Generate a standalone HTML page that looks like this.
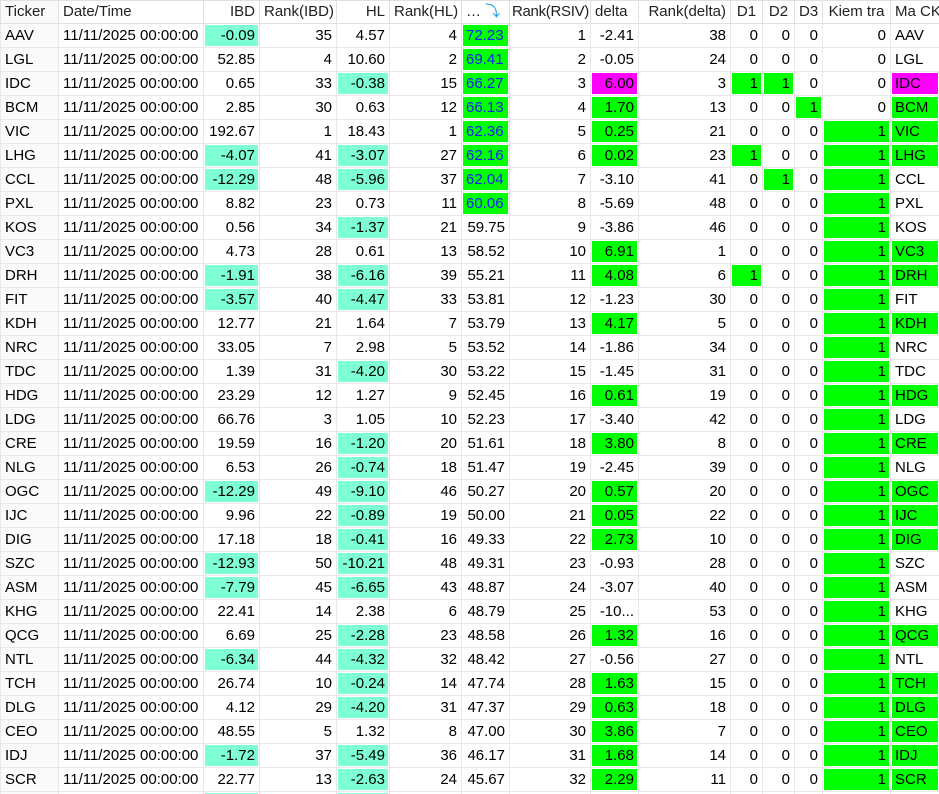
<!DOCTYPE html>
<html><head><meta charset="utf-8"><style>
html,body{margin:0;padding:0;background:#fff;width:939px;height:794px;overflow:hidden}
table{border-collapse:collapse;table-layout:fixed;width:939px;font-family:"Liberation Sans",sans-serif;font-size:15px;color:#000}
td,th{height:23px;padding:0 4px;border:1px solid #e8e8e8;text-align:right;white-space:nowrap;overflow:hidden;font-weight:normal;line-height:22px}
th{height:21px;color:#222;border-color:#e0e0e0}
td:first-child,th:first-child{text-align:left;background:#fafafa}
td:nth-child(2),th:nth-child(2),td:last-child,th:last-child{text-align:left}
th:nth-child(14){text-align:center}
.a{background:#7fffd4;box-shadow:inset 0 0 0 1px #fff}
.g{background:#00ff00;box-shadow:inset 0 0 0 1px #fff}
.m{background:#ff00ff;box-shadow:inset 0 0 0 1px #fff}
.b{background:#00ff00;color:#1a1aff;box-shadow:inset 0 0 0 1px #fff;text-align:left}
</style></head><body>
<table>
<colgroup><col style="width:58px"><col style="width:145px"><col style="width:56px"><col style="width:77px"><col style="width:53px"><col style="width:72px"><col style="width:48px"><col style="width:81px"><col style="width:48px"><col style="width:92px"><col style="width:32px"><col style="width:32px"><col style="width:28px"><col style="width:68px"><col style="width:49px"></colgroup>
<tr><th>Ticker</th><th>Date/Time</th><th>IBD</th><th>Rank(IBD)</th><th>HL</th><th>Rank(HL)</th><th style="text-align:left">… <span style="color:#19a0e0">⤵</span></th><th style="padding:0 1px;letter-spacing:-0.3px">Rank(RSIV)</th><th style="text-align:left">delta</th><th>Rank(delta)</th><th style="text-align:center">D1</th><th style="text-align:center">D2</th><th style="text-align:center">D3</th><th>Kiem tra</th><th>Ma CK</th></tr>
<tr><td>AAV</td><td>11/11/2025 00:00:00</td><td class="a">-0.09</td><td>35</td><td>4.57</td><td>4</td><td class="b">72.23</td><td>1</td><td>-2.41</td><td>38</td><td>0</td><td>0</td><td>0</td><td>0</td><td>AAV</td></tr>
<tr><td>LGL</td><td>11/11/2025 00:00:00</td><td>52.85</td><td>4</td><td>10.60</td><td>2</td><td class="b">69.41</td><td>2</td><td>-0.05</td><td>24</td><td>0</td><td>0</td><td>0</td><td>0</td><td>LGL</td></tr>
<tr><td>IDC</td><td>11/11/2025 00:00:00</td><td>0.65</td><td>33</td><td class="a">-0.38</td><td>15</td><td class="b">66.27</td><td>3</td><td class="m">6.00</td><td>3</td><td class="g">1</td><td class="g">1</td><td>0</td><td>0</td><td class="m">IDC</td></tr>
<tr><td>BCM</td><td>11/11/2025 00:00:00</td><td>2.85</td><td>30</td><td>0.63</td><td>12</td><td class="b">66.13</td><td>4</td><td class="g">1.70</td><td>13</td><td>0</td><td>0</td><td class="g">1</td><td>0</td><td class="g">BCM</td></tr>
<tr><td>VIC</td><td>11/11/2025 00:00:00</td><td>192.67</td><td>1</td><td>18.43</td><td>1</td><td class="b">62.36</td><td>5</td><td class="g">0.25</td><td>21</td><td>0</td><td>0</td><td>0</td><td class="g">1</td><td class="g">VIC</td></tr>
<tr><td>LHG</td><td>11/11/2025 00:00:00</td><td class="a">-4.07</td><td>41</td><td class="a">-3.07</td><td>27</td><td class="b">62.16</td><td>6</td><td class="g">0.02</td><td>23</td><td class="g">1</td><td>0</td><td>0</td><td class="g">1</td><td class="g">LHG</td></tr>
<tr><td>CCL</td><td>11/11/2025 00:00:00</td><td class="a">-12.29</td><td>48</td><td class="a">-5.96</td><td>37</td><td class="b">62.04</td><td>7</td><td>-3.10</td><td>41</td><td>0</td><td class="g">1</td><td>0</td><td class="g">1</td><td>CCL</td></tr>
<tr><td>PXL</td><td>11/11/2025 00:00:00</td><td>8.82</td><td>23</td><td>0.73</td><td>11</td><td class="b">60.06</td><td>8</td><td>-5.69</td><td>48</td><td>0</td><td>0</td><td>0</td><td class="g">1</td><td>PXL</td></tr>
<tr><td>KOS</td><td>11/11/2025 00:00:00</td><td>0.56</td><td>34</td><td class="a">-1.37</td><td>21</td><td>59.75</td><td>9</td><td>-3.86</td><td>46</td><td>0</td><td>0</td><td>0</td><td class="g">1</td><td>KOS</td></tr>
<tr><td>VC3</td><td>11/11/2025 00:00:00</td><td>4.73</td><td>28</td><td>0.61</td><td>13</td><td>58.52</td><td>10</td><td class="g">6.91</td><td>1</td><td>0</td><td>0</td><td>0</td><td class="g">1</td><td class="g">VC3</td></tr>
<tr><td>DRH</td><td>11/11/2025 00:00:00</td><td class="a">-1.91</td><td>38</td><td class="a">-6.16</td><td>39</td><td>55.21</td><td>11</td><td class="g">4.08</td><td>6</td><td class="g">1</td><td>0</td><td>0</td><td class="g">1</td><td class="g">DRH</td></tr>
<tr><td>FIT</td><td>11/11/2025 00:00:00</td><td class="a">-3.57</td><td>40</td><td class="a">-4.47</td><td>33</td><td>53.81</td><td>12</td><td>-1.23</td><td>30</td><td>0</td><td>0</td><td>0</td><td class="g">1</td><td>FIT</td></tr>
<tr><td>KDH</td><td>11/11/2025 00:00:00</td><td>12.77</td><td>21</td><td>1.64</td><td>7</td><td>53.79</td><td>13</td><td class="g">4.17</td><td>5</td><td>0</td><td>0</td><td>0</td><td class="g">1</td><td class="g">KDH</td></tr>
<tr><td>NRC</td><td>11/11/2025 00:00:00</td><td>33.05</td><td>7</td><td>2.98</td><td>5</td><td>53.52</td><td>14</td><td>-1.86</td><td>34</td><td>0</td><td>0</td><td>0</td><td class="g">1</td><td>NRC</td></tr>
<tr><td>TDC</td><td>11/11/2025 00:00:00</td><td>1.39</td><td>31</td><td class="a">-4.20</td><td>30</td><td>53.22</td><td>15</td><td>-1.45</td><td>31</td><td>0</td><td>0</td><td>0</td><td class="g">1</td><td>TDC</td></tr>
<tr><td>HDG</td><td>11/11/2025 00:00:00</td><td>23.29</td><td>12</td><td>1.27</td><td>9</td><td>52.45</td><td>16</td><td class="g">0.61</td><td>19</td><td>0</td><td>0</td><td>0</td><td class="g">1</td><td class="g">HDG</td></tr>
<tr><td>LDG</td><td>11/11/2025 00:00:00</td><td>66.76</td><td>3</td><td>1.05</td><td>10</td><td>52.23</td><td>17</td><td>-3.40</td><td>42</td><td>0</td><td>0</td><td>0</td><td class="g">1</td><td>LDG</td></tr>
<tr><td>CRE</td><td>11/11/2025 00:00:00</td><td>19.59</td><td>16</td><td class="a">-1.20</td><td>20</td><td>51.61</td><td>18</td><td class="g">3.80</td><td>8</td><td>0</td><td>0</td><td>0</td><td class="g">1</td><td class="g">CRE</td></tr>
<tr><td>NLG</td><td>11/11/2025 00:00:00</td><td>6.53</td><td>26</td><td class="a">-0.74</td><td>18</td><td>51.47</td><td>19</td><td>-2.45</td><td>39</td><td>0</td><td>0</td><td>0</td><td class="g">1</td><td>NLG</td></tr>
<tr><td>OGC</td><td>11/11/2025 00:00:00</td><td class="a">-12.29</td><td>49</td><td class="a">-9.10</td><td>46</td><td>50.27</td><td>20</td><td class="g">0.57</td><td>20</td><td>0</td><td>0</td><td>0</td><td class="g">1</td><td class="g">OGC</td></tr>
<tr><td>IJC</td><td>11/11/2025 00:00:00</td><td>9.96</td><td>22</td><td class="a">-0.89</td><td>19</td><td>50.00</td><td>21</td><td class="g">0.05</td><td>22</td><td>0</td><td>0</td><td>0</td><td class="g">1</td><td class="g">IJC</td></tr>
<tr><td>DIG</td><td>11/11/2025 00:00:00</td><td>17.18</td><td>18</td><td class="a">-0.41</td><td>16</td><td>49.33</td><td>22</td><td class="g">2.73</td><td>10</td><td>0</td><td>0</td><td>0</td><td class="g">1</td><td class="g">DIG</td></tr>
<tr><td>SZC</td><td>11/11/2025 00:00:00</td><td class="a">-12.93</td><td>50</td><td class="a">-10.21</td><td>48</td><td>49.31</td><td>23</td><td>-0.93</td><td>28</td><td>0</td><td>0</td><td>0</td><td class="g">1</td><td>SZC</td></tr>
<tr><td>ASM</td><td>11/11/2025 00:00:00</td><td class="a">-7.79</td><td>45</td><td class="a">-6.65</td><td>43</td><td>48.87</td><td>24</td><td>-3.07</td><td>40</td><td>0</td><td>0</td><td>0</td><td class="g">1</td><td>ASM</td></tr>
<tr><td>KHG</td><td>11/11/2025 00:00:00</td><td>22.41</td><td>14</td><td>2.38</td><td>6</td><td>48.79</td><td>25</td><td>-10...</td><td>53</td><td>0</td><td>0</td><td>0</td><td class="g">1</td><td>KHG</td></tr>
<tr><td>QCG</td><td>11/11/2025 00:00:00</td><td>6.69</td><td>25</td><td class="a">-2.28</td><td>23</td><td>48.58</td><td>26</td><td class="g">1.32</td><td>16</td><td>0</td><td>0</td><td>0</td><td class="g">1</td><td class="g">QCG</td></tr>
<tr><td>NTL</td><td>11/11/2025 00:00:00</td><td class="a">-6.34</td><td>44</td><td class="a">-4.32</td><td>32</td><td>48.42</td><td>27</td><td>-0.56</td><td>27</td><td>0</td><td>0</td><td>0</td><td class="g">1</td><td>NTL</td></tr>
<tr><td>TCH</td><td>11/11/2025 00:00:00</td><td>26.74</td><td>10</td><td class="a">-0.24</td><td>14</td><td>47.74</td><td>28</td><td class="g">1.63</td><td>15</td><td>0</td><td>0</td><td>0</td><td class="g">1</td><td class="g">TCH</td></tr>
<tr><td>DLG</td><td>11/11/2025 00:00:00</td><td>4.12</td><td>29</td><td class="a">-4.20</td><td>31</td><td>47.37</td><td>29</td><td class="g">0.63</td><td>18</td><td>0</td><td>0</td><td>0</td><td class="g">1</td><td class="g">DLG</td></tr>
<tr><td>CEO</td><td>11/11/2025 00:00:00</td><td>48.55</td><td>5</td><td>1.32</td><td>8</td><td>47.00</td><td>30</td><td class="g">3.86</td><td>7</td><td>0</td><td>0</td><td>0</td><td class="g">1</td><td class="g">CEO</td></tr>
<tr><td>IDJ</td><td>11/11/2025 00:00:00</td><td class="a">-1.72</td><td>37</td><td class="a">-5.49</td><td>36</td><td>46.17</td><td>31</td><td class="g">1.68</td><td>14</td><td>0</td><td>0</td><td>0</td><td class="g">1</td><td class="g">IDJ</td></tr>
<tr><td>SCR</td><td>11/11/2025 00:00:00</td><td>22.77</td><td>13</td><td class="a">-2.63</td><td>24</td><td>45.67</td><td>32</td><td class="g">2.29</td><td>11</td><td>0</td><td>0</td><td>0</td><td class="g">1</td><td class="g">SCR</td></tr>
<tr><td></td><td></td><td class="a"></td><td></td><td class="a"></td><td></td><td></td><td></td><td></td><td></td><td></td><td></td><td></td><td></td><td></td></tr>
</table>
</body></html>
